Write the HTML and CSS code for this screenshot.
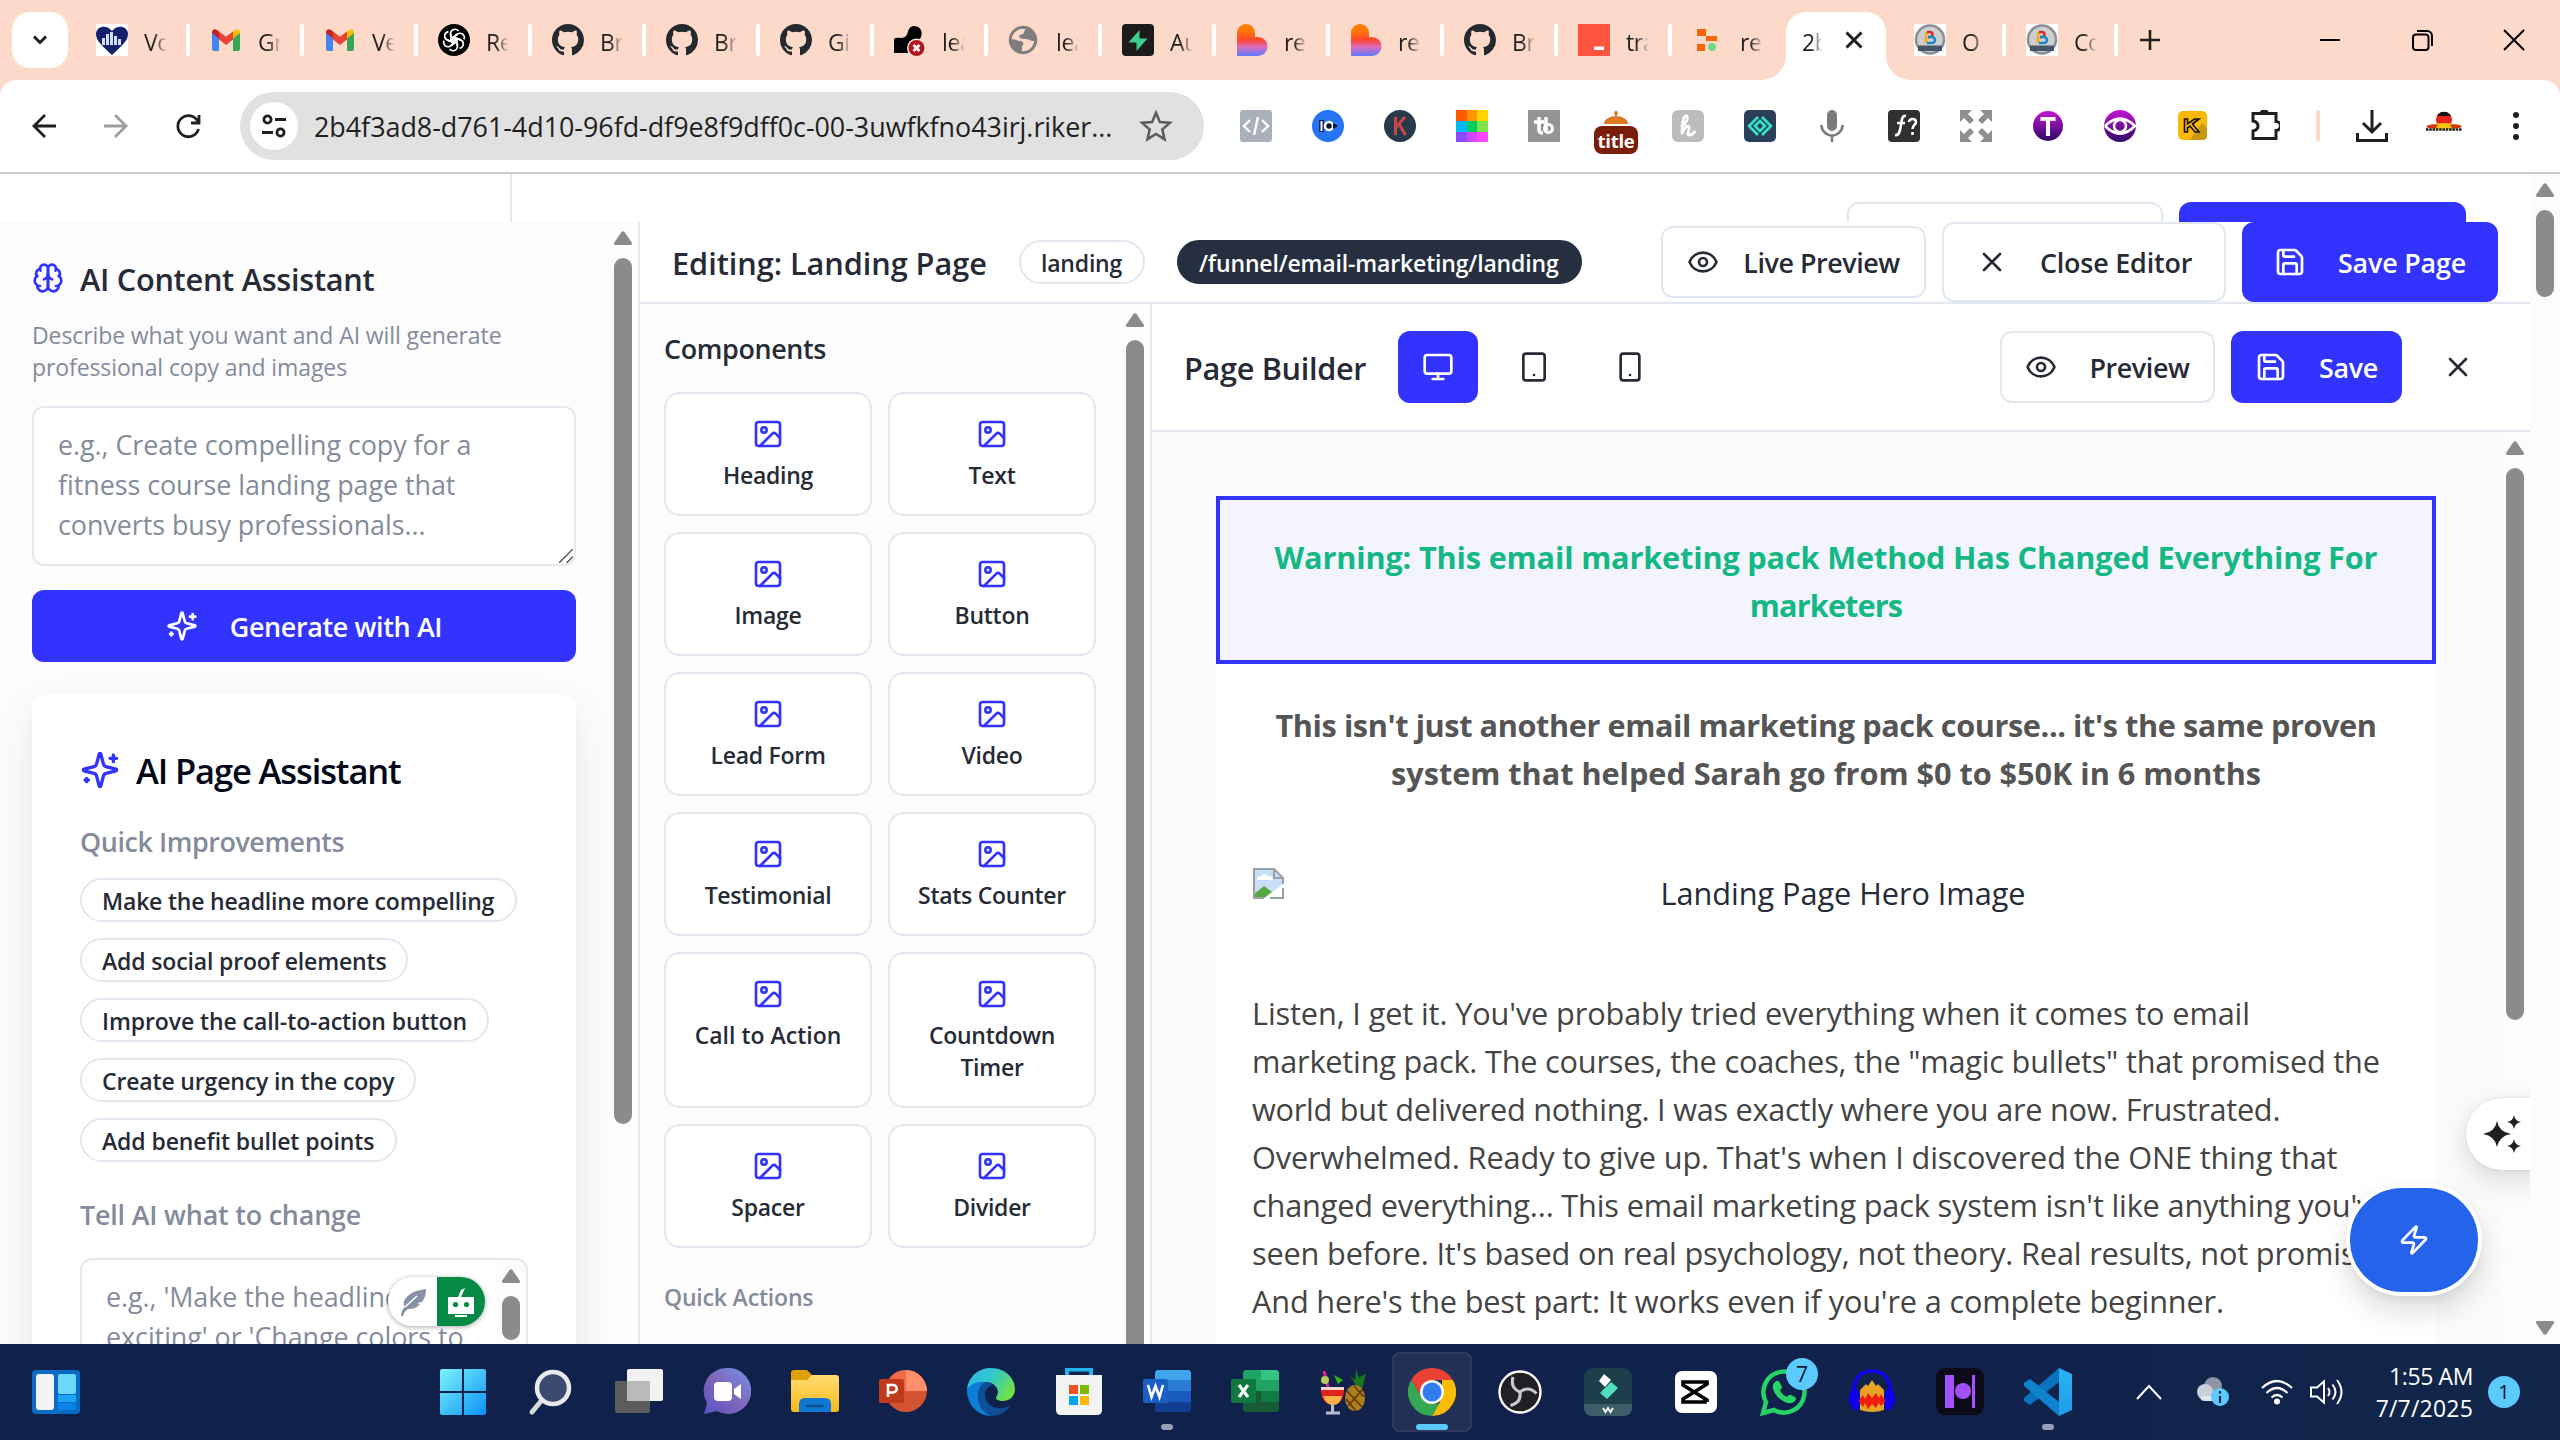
FILE: index.html
```html
<!DOCTYPE html>
<html lang="en">
<head>
<meta charset="utf-8">
<title>Page Builder</title>
<link rel="stylesheet" href="styles.css">
</head>
<body>
<svg class="defs" aria-hidden="true">
  <defs>
    <linearGradient id="lov" x1="0" y1="0" x2="0" y2="1"><stop offset="0.2" stop-color="#ff7a00"/><stop offset="0.5" stop-color="#ff4530"/><stop offset="0.72" stop-color="#d86cc0"/><stop offset="1" stop-color="#5f7cff"/></linearGradient>
    <linearGradient id="win" x1="0" y1="0" x2="1" y2="1"><stop offset="0" stop-color="#7df3fb"/><stop offset="1" stop-color="#0a92f7"/></linearGradient>
    <linearGradient id="fold" x1="0" y1="0" x2="0" y2="1"><stop offset="0" stop-color="#ffdc70"/><stop offset="1" stop-color="#fbb91a"/></linearGradient>
    <linearGradient id="chat" x1="1" y1="0" x2="0" y2="1"><stop offset="0" stop-color="#6f95ee"/><stop offset="0.5" stop-color="#8168b8"/><stop offset="1" stop-color="#5b52c8"/></linearGradient>
    <linearGradient id="edgea" x1="0" y1="0" x2="1" y2="0.5"><stop offset="0" stop-color="#2fb3ee"/><stop offset="0.5" stop-color="#2fc7cf"/><stop offset="1" stop-color="#6be04a"/></linearGradient>
    <linearGradient id="purp" x1="0" y1="0" x2="0" y2="1"><stop offset="0" stop-color="#c414d2"/><stop offset="1" stop-color="#2d0a66"/></linearGradient>
    <linearGradient id="code" x1="0" y1="0" x2="0" y2="1"><stop offset="0" stop-color="#29b2f5"/><stop offset="1" stop-color="#1e9de8"/></linearGradient>
  </defs>
  <symbol id="eye" viewBox="0 0 24 24"><path d="M2.062 12.348a1 1 0 0 1 0-.696 10.75 10.75 0 0 1 19.876 0 1 1 0 0 1 0 .696 10.75 10.75 0 0 1-19.876 0"/><circle cx="12" cy="12" r="3"/></symbol>
  <symbol id="save" viewBox="0 0 24 24"><path d="M15.2 3a2 2 0 0 1 1.4.6l3.8 3.8a2 2 0 0 1 .6 1.4V19a2 2 0 0 1-2 2H5a2 2 0 0 1-2-2V5a2 2 0 0 1 2-2z"/><path d="M17 21v-7a1 1 0 0 0-1-1H8a1 1 0 0 0-1 1v7"/><path d="M7 3v4a1 1 0 0 0 1 1h7"/></symbol>
  <symbol id="sparkles" viewBox="0 0 24 24"><path d="M9.937 15.5A2 2 0 0 0 8.5 14.063l-6.135-1.582a.5.5 0 0 1 0-.962L8.5 9.936A2 2 0 0 0 9.937 8.5l1.582-6.135a.5.5 0 0 1 .963 0L14.063 8.5A2 2 0 0 0 15.5 9.937l6.135 1.581a.5.5 0 0 1 0 .964L15.5 14.063a2 2 0 0 0-1.437 1.437l-1.582 6.135a.5.5 0 0 1-.963 0z"/><path d="M20 3v4M22 5h-4M4 17v2M5 18H3"/></symbol>
  <symbol id="brain" viewBox="0 0 24 24"><path d="M12 5a3 3 0 1 0-5.997.125 4 4 0 0 0-2.526 5.77 4 4 0 0 0 .556 6.588A4 4 0 1 0 12 18Z"/><path d="M12 5a3 3 0 1 1 5.997.125 4 4 0 0 1 2.526 5.77 4 4 0 0 1-.556 6.588A4 4 0 1 1 12 18Z"/><path d="M15 13a4.5 4.5 0 0 1-3-4 4.5 4.5 0 0 1-3 4M17.599 6.5a3 3 0 0 0 .399-1.375M6.003 5.125A3 3 0 0 0 6.401 6.5M3.477 10.896a4 4 0 0 1 .585-.396M19.938 10.5a4 4 0 0 1 .585.396M6 18a4 4 0 0 1-1.967-.516M19.967 17.484A4 4 0 0 1 18 18"/></symbol>
  <symbol id="image" viewBox="0 0 24 24"><rect width="18" height="18" x="3" y="3" rx="2"/><circle cx="9" cy="9" r="2"/><path d="m21 15-3.086-3.086a2 2 0 0 0-2.828 0L6 21"/></symbol>
  <symbol id="x" viewBox="0 0 24 24"><path d="M18 6 6 18M6 6l12 12"/></symbol>
  <symbol id="github" viewBox="0 0 16 16"><path fill="#24292f" d="M8 0C3.58 0 0 3.58 0 8c0 3.54 2.29 6.53 5.47 7.59.4.07.55-.17.55-.38 0-.19-.01-.82-.01-1.49-2.01.37-2.53-.49-2.69-.94-.09-.23-.48-.94-.82-1.13-.28-.15-.68-.52-.01-.53.63-.01 1.08.58 1.23.82.72 1.21 1.87.87 2.33.66.07-.52.28-.87.51-1.07-1.78-.2-3.64-.89-3.64-3.95 0-.87.31-1.59.82-2.15-.08-.2-.36-1.02.08-2.12 0 0 .67-.21 2.2.82a7.6 7.6 0 0 1 4 0c1.53-1.04 2.2-.82 2.2-.82.44 1.1.16 1.92.08 2.12.51.56.82 1.27.82 2.15 0 3.07-1.87 3.75-3.65 3.95.29.25.54.73.54 1.48 0 1.07-.01 1.93-.01 2.2 0 .21.15.46.55.38A8 8 0 0 0 16 8c0-4.42-3.58-8-8-8"/></symbol>
  <symbol id="gmail" viewBox="0 0 32 32"><path fill="#4285f4" d="M2 8v17a2 2 0 0 0 2 2h5V14z"/><path fill="#34a853" d="M30 8v17a2 2 0 0 1-2 2h-5V14z"/><path fill="#c5221f" d="M2 8.500V9l7 5.500V7.500L7 6C5 4.500 2 5.500 2 8.500"/><path fill="#fbbc04" d="M30 8.500V9l-7 5.500V7.500L25 6c2-1.500 5-.5 5 2.500"/><path fill="#ea4335" d="M9 7.500 16 12.700 23 7.500v8L16 21 9 15.500z"/></symbol>
  <symbol id="lovable" viewBox="0 0 32 32"><path fill="url(#lov)" d="M1 32V9a9 9 0 0 1 18 0v4h3a9.500 9.500 0 0 1 0 19z"/></symbol>
  <symbol id="seal" viewBox="0 0 32 32"><rect width="32" height="32" fill="#fff"/><circle cx="16" cy="15.500" r="14" fill="#cfcfd2" stroke="#8b8d92" stroke-width="2.500"/><path d="M12 8v11" stroke="#e8b02a" stroke-width="3"/><path d="M13 8h3a2.500 2.500 0 0 1 0 5h-2" fill="none" stroke="#d62a2a" stroke-width="2.500"/><path d="M14 13h4a3 3 0 0 1 0 6h-5" fill="none" stroke="#1d86c8" stroke-width="2.500"/><rect x="4" y="21.500" width="24" height="5.500" fill="#46566a"/></symbol>
  <symbol id="tri" viewBox="0 0 18 14"><path fill="#8b8b8b" d="M7.300 1.200a2 2 0 0 1 3.400 0l6.800 10A1.600 1.600 0 0 1 16.200 14H1.800A1.600 1.600 0 0 1 .5 11.200z"/></symbol>
</svg>

<div class="tabstrip">
  <div class="tab-search"><svg width="20" height="20" viewBox="0 0 20 20"><path d="m4 6.500 6 6 6-6" fill="none" stroke="#1f1f1f" stroke-width="3"/></svg></div>
  <div class="tab first"><svg class="fav" viewBox="0 0 32 32"><rect width="32" height="32" fill="#fff"/><path d="M16 31C5 21 0 16 0 10 0 2 11 0 16 7c5-7 16-5 16 3 0 6-5 11-16 21" fill="#14206b"/><path d="M6 21V14h3v7m1 0V10h3v11m1 0V8h3v13m1 0V12h3v9m1 0v-6h3v6" fill="#cfe0f5"/></svg><span>Vo</span></div>
  <div class="tab"><svg class="fav"><use href="#gmail"/></svg><span>Gr</span></div>
  <div class="tab"><svg class="fav"><use href="#gmail"/></svg><span>Ve</span></div>
  <div class="tab"><svg class="fav" viewBox="0 0 32 32"><circle cx="16" cy="16" r="16"/><g fill="none" stroke="#fff" stroke-width="1.600"><path id="pt" d="M12.500 12.500V9.500a4.500 4.500 0 0 1 8-2.500M12.500 12.500l6.500 3.700v6"/><use href="#pt" transform="rotate(60 16 16)"/><use href="#pt" transform="rotate(120 16 16)"/><use href="#pt" transform="rotate(180 16 16)"/><use href="#pt" transform="rotate(240 16 16)"/><use href="#pt" transform="rotate(300 16 16)"/></g></svg><span>Re</span></div>
  <div class="tab"><svg class="fav"><use href="#github"/></svg><span>Br</span></div>
  <div class="tab"><svg class="fav"><use href="#github"/></svg><span>Br</span></div>
  <div class="tab"><svg class="fav"><use href="#github"/></svg><span>Gi</span></div>
  <div class="tab"><svg class="fav" viewBox="0 0 32 32"><path d="M0 15c4-3 8 1 12-3 3-3 1-9 8-10 8 0 10 9 5 14-4 4-11 5-11 13H0z"/><circle cx="22.500" cy="24" r="9.500" fill="#fbeae2"/><circle cx="22.500" cy="24" r="8" fill="#b3151f"/><path d="m19.500 21 6 6m0-6-6 6" stroke="#fff" stroke-width="2.600"/></svg><span>lea</span></div>
  <div class="tab"><svg class="fav" viewBox="0 0 32 32"><circle cx="15" cy="16" r="12.700" fill="none" stroke="#7e7e7e" stroke-width="3"/><path fill="#7e7e7e" d="M3 15c4 0 7 2 10 2 3 1 3 4 1 5v6C7 27 3 22 3 15M11 12c1-2 4-1 5-3 0-2 1-4 3-5 5 2 8 6 8 12-3 3-5-1-9-1-3 0-7 0-7-3"/></svg><span>lea</span></div>
  <div class="tab"><svg class="fav" viewBox="0 0 32 32"><rect width="32" height="32" rx="4" fill="#1c1c1c"/><path fill="#3ecf8e" d="M17.500 6v8.500H25.500L14.500 27v-8.500H6.500z"/></svg><span>Au</span></div>
  <div class="tab"><svg class="fav"><use href="#lovable"/></svg><span>re</span></div>
  <div class="tab"><svg class="fav"><use href="#lovable"/></svg><span>re</span></div>
  <div class="tab"><svg class="fav"><use href="#github"/></svg><span>Br</span></div>
  <div class="tab"><svg class="fav" viewBox="0 0 32 32"><rect width="32" height="32" fill="#ff5440"/><rect x="16" y="22.500" width="10" height="3.500" fill="#fff"/></svg><span>tra</span></div>
  <div class="tab last"><svg class="fav" viewBox="0 0 32 32"><path fill="#f9640a" d="M5 5h9v7H5zM14 12h11v5H14zM5 20h8v7H5z"/><circle cx="20" cy="23" r="4" fill="#6bdc84"/></svg><span>re</span></div>
  <div class="tab active"><span>2b</span><svg width="32" height="32" viewBox="0 0 32 32"><path d="m8.500 8.500 15 15m0-15-15 15" stroke="#1f1f1f" stroke-width="3"/></svg></div>
  <div class="tab after"><svg class="fav"><use href="#seal"/></svg><span>O</span></div>
  <div class="tab"><svg class="fav"><use href="#seal"/></svg><span>Co</span></div>
  <svg class="newtab" viewBox="0 0 24 24"><path d="M12 2v20M2 12h20" stroke="#1f1f1f" stroke-width="2.600"/></svg>
  <div class="wincontrols">
    <svg width="24" height="24" viewBox="0 0 24 24"><path d="M2 12h20" stroke="#000" stroke-width="2"/></svg>
    <svg width="24" height="24" viewBox="0 0 24 24"><g fill="none" stroke="#000" stroke-width="2"><rect x="3" y="6.500" width="15.500" height="15.500" rx="3"/><path d="M7 3h10a5 5 0 0 1 5 5v10"/></g></svg>
    <svg width="24" height="24" viewBox="0 0 24 24"><path d="m2 2 20 20M22 2 2 22" stroke="#000" stroke-width="2"/></svg>
  </div>
</div>

<div class="toolbar">
  <div class="nav">
    <svg width="32" height="32" viewBox="0 0 32 32"><path d="M28 16H6M17 5 6 16l11 11" fill="none" stroke="#1f1f1f" stroke-width="2.800"/></svg>
    <svg width="32" height="32" viewBox="0 0 32 32"><path d="M4 16h22M15 5l11 11-11 11" fill="none" stroke="#9e9e9e" stroke-width="2.800"/></svg>
    <svg width="32" height="32" viewBox="0 0 32 32"><path d="M27 5v8h-8M26 12a10.500 10.500 0 1 0 .5 7" fill="none" stroke="#1f1f1f" stroke-width="2.800"/></svg>
  </div>
  <div class="omnibox">
    <div class="siteinfo"><svg width="28" height="28" viewBox="0 0 28 28"><g fill="none" stroke="#1f1f1f" stroke-width="2.800"><circle cx="7.500" cy="7.500" r="3.600"/><path d="M15 7.500h11M2 20.500h11"/><circle cx="20.500" cy="20.500" r="3.600"/></g></svg></div>
    <span class="url">2b4f3ad8-d761-4d10-96fd-df9e8f9dff0c-00-3uwfkfno43irj.riker...</span>
    <svg width="36" height="36" viewBox="0 0 24 24"><path d="m12 3.200 2.600 6.100 6.600.6-5 4.400 1.500 6.500-5.700-3.500-5.700 3.500 1.500-6.500-5-4.400 6.600-.6z" fill="none" stroke="#5c5c5c" stroke-width="1.700"/></svg>
  </div>
  <div class="exts">
    <svg viewBox="0 0 32 32"><rect width="32" height="32" rx="3" fill="#a9b0bb"/><path d="m10 10-6 6 6 6M22 10l6 6-6 6M18 7l-4 18" fill="none" stroke="#fff" stroke-width="2.400"/></svg>
    <svg viewBox="0 0 32 32"><circle cx="16" cy="16" r="16" fill="#2474f5"/><path d="M9.500 10v12" stroke="#0b1430" stroke-width="4.500"/><path d="M9.500 11v10" stroke="#fff" stroke-width="2"/><circle cx="17" cy="16" r="4" fill="#0b1430" stroke="#fff" stroke-width="2.500"/><path d="m21 13 5 3-5 3" fill="#0b1430"/></svg>
    <svg viewBox="0 0 32 32"><circle cx="16" cy="16" r="16" fill="#263a4b"/><path d="M11.500 7v18M21 7l-9 10M15 14l6.500 11" stroke="#c44" stroke-width="3"/></svg>
    <svg viewBox="0 0 32 32"><path fill="#ff5a00" d="M0 0h11v11H0z"/><path fill="#ff9300" d="M11 0h10v11H11z"/><path fill="#ffd400" d="M21 0h11v11H21z"/><path fill="#00b8ff" d="M0 11h11v11H0z"/><path fill="#00cf5d" d="M11 11h10v11H11z"/><path fill="#7fe34a" d="M21 11h11v11H21z"/><path fill="#8a4bff" d="M0 22h11v10H0z"/><path fill="#cf48ff" d="M11 22h10v10H11z"/><path fill="#ff46ff" d="M21 22h11v10H21z"/></svg>
    <svg viewBox="0 0 32 32"><rect width="32" height="32" rx="1" fill="#949494"/><path d="M11 7v13q0 3 4 3M6 12h10M18 7v15" fill="none" stroke="#fff" stroke-width="3.600"/><circle cx="20.500" cy="18.500" r="4" fill="none" stroke="#fff" stroke-width="3"/></svg>
    <div class="titleext"><svg viewBox="0 0 32 32"><circle cx="16" cy="3" r="2"/><path d="M15 4h2v3h-2zM4 14a12 8 0 0 1 24 0z"/></svg><b>title</b></div>
    <svg viewBox="0 0 32 32"><rect width="32" height="32" rx="6" fill="#bdbdbd"/><path d="M9 17c6-4 8-11 5-11s-4 8-4 18c2-7 6-9 7-7s-3 8 0 8 5-2 6-4" fill="none" stroke="#fff" stroke-width="2.800"/></svg>
    <svg viewBox="0 0 32 32"><rect width="32" height="32" rx="5" fill="#2a405a"/><path d="m14 7-9 9 9 9M18 7l9 9-9 9M16 11l-5 5 5 5 5-5z" fill="none" stroke="#33e6c0" stroke-width="2.600"/></svg>
    <svg viewBox="0 0 32 32"><rect x="11" width="10" height="21" rx="5" fill="#7b7b7b"/><path d="M5.500 15a10.500 10.500 0 0 0 21 0M16 26v6" fill="none" stroke="#7b7b7b" stroke-width="2.600"/></svg>
    <svg viewBox="0 0 32 32"><rect width="32" height="32" rx="4" fill="#303030"/><path d="M18 6c-4-1-4 3-5 9s-2 11-6 10M9 13h8M21 12c0-4 7-4 7 0 0 3-3.500 3-3.500 7M24.500 22v3" fill="none" stroke="#fff" stroke-width="2.600"/></svg>
    <svg viewBox="0 0 32 32"><path fill="#8f8f8f" d="M0 0h12L8 4l6 6-4 4-6-6-4 4zM32 0v12l-4-4-6 6-4-4 6-6-4-4zM0 32V20l4 4 6-6 4 4-6 6 4 4zM32 32H20l4-4-6-6 4-4 6 6 4-4z"/></svg>
    <svg viewBox="0 0 32 32"><circle cx="16" cy="16" r="15" fill="url(#purp)"/><path d="M8.500 9h15M16 9v17" stroke="#fff" stroke-width="4"/></svg>
    <svg viewBox="0 0 32 32"><circle cx="16" cy="16" r="16" fill="url(#purp)"/><path d="M1 16q15-15 30 0-15 15-30 0" fill="none" stroke="#fff" stroke-width="2.600"/><circle cx="16" cy="16" r="6" fill="none" stroke="#fff" stroke-width="2.600"/></svg>
    <svg viewBox="0 0 32 32"><rect x="2" y="1" width="29" height="29" rx="5" fill="#fbb805"/><path d="m14 30 12-17 5 5v8q0 4-5 4z" fill="#c9980c"/><path d="M8.500 9v13h3v-4l2.500-2 5 6h4l-6.500-8L23 9h-4.500l-7 5V9z" fill="none" stroke="#111" stroke-width="1.600"/></svg>
    <svg viewBox="0 0 32 32"><path d="M5 3.500h23v8a4 4 0 0 1 0 9v8H5v-7.500q5-1 5-5t-5-5zM13 3a3.500 3.500 0 0 1 6.500 0" fill="none" stroke="#1f1f1f" stroke-width="3"/></svg>
    <i></i>
    <svg viewBox="0 0 32 32"><path d="M16 0v21M7 13l9 9 9-9M1.500 23v7.500h29V23" fill="none" stroke="#1f1f1f" stroke-width="3"/></svg>
    <svg class="profile" viewBox="0 0 40 32"><circle cx="20" cy="10" r="8" fill="#e8221c"/><path d="M13 6a8 8 0 0 1 14 0z" fill="#111"/><path d="M6 15q14-4 28 0l-2 4H8z" fill="#f7c412"/><path d="M2 16q7-3 12-1l-2 3H4zM26 15q6-2 12 1l-2 2H28z" fill="#d4380f"/><path d="M2 19.500h36" stroke="#1c1c1c" stroke-width="2.500" stroke-dasharray="2.500 .8"/></svg>
    <svg viewBox="0 0 32 32"><g fill="#1f1f1f"><circle cx="16" cy="5" r="3"/><circle cx="16" cy="16" r="3"/><circle cx="16" cy="27" r="3"/></g></svg>
  </div>
</div>

<div class="viewport">
  <div class="content">
    <div class="backdrop">
      <div class="back-side"></div>
      <div class="back-main"><div class="ghost"></div><div class="ghost solid"></div></div>
    </div>
    <div class="editor">
      <aside class="sidebar">
        <div class="side-body">
          <h2 class="side-title"><svg class="ic blue"><use href="#brain"/></svg>AI Content Assistant</h2>
          <p class="hint">Describe what you want and AI will generate<br>professional copy and images</p>
          <div class="textarea">e.g., Create compelling copy for a<br>fitness course landing page that<br>converts busy professionals...
            <svg class="grip" viewBox="0 0 14 14"><path d="M0 14 14 0M7.500 14 14 7.500" stroke="#555" stroke-width="1.400"/></svg>
          </div>
          <div class="btn primary wide"><svg class="ic"><use href="#sparkles"/></svg><span>Generate with AI</span></div>
          <div class="card">
            <h3><svg class="ic blue big"><use href="#sparkles"/></svg><span>AI Page Assistant</span></h3>
            <div class="label tight">Quick Improvements</div>
            <div class="chips">
              <div class="chip">Make the headline more compelling</div>
              <div class="chip c2">Add social proof elements</div>
              <div class="chip c3">Improve the call-to-action button</div>
              <div class="chip c4">Create urgency in the copy</div>
              <div class="chip c5">Add benefit bullet points</div>
            </div>
            <div class="label tell">Tell AI what to change</div>
            <div class="textarea small">
              <div class="ph">e.g., 'Make the headline more<br>exciting' or 'Change colors to</div>
              <div class="scroll"><svg class="arrow"><use href="#tri"/></svg><div class="thumb"></div></div>
              <div class="helper">
                <div><svg width="28" height="30" viewBox="0 0 28 30"><path fill="#8791a8" d="M2 29c0-4 1-6 4-9-4-5 2-12 9-15 4-2 8-2 12-3 0 5-1 9-4 13l-5 1 3 1c-3 4-7 5-12 5-3 2-4 4-5 7z"/><path d="M6 20 18 9" stroke="#fff" stroke-width="1.600"/></svg></div>
                <div class="bot"><svg width="30" height="30" viewBox="0 0 30 30"><path fill="#fff" d="M2 10h10l3-7 4-2-4 9h13v17H2zM9 28h12v2H9z"/><circle cx="9.500" cy="17.500" r="2.600" fill="#058a45"/><circle cx="20.500" cy="17.500" r="2.600" fill="#058a45"/></svg></div>
              </div>
            </div>
          </div>
        </div>
        <div class="scroll"><svg class="arrow"><use href="#tri"/></svg><div class="thumb"></div></div>
      </aside>

      <main class="main">
        <header class="edit-head">
          <h1>Editing: Landing Page</h1>
          <div class="chip type">landing</div>
          <div class="chip dark">/funnel/email-marketing/landing</div>
          <div class="actions">
            <div class="btn outline live"><svg class="ic"><use href="#eye"/></svg><span>Live Preview</span></div>
            <div class="btn outline tall close"><svg class="ic"><use href="#x"/></svg><span>Close Editor</span></div>
            <div class="btn primary tall savepage"><svg class="ic"><use href="#save"/></svg><span>Save Page</span></div>
          </div>
        </header>
        <div class="workspace">
          <section class="components">
            <div class="comp-body">
              <h4>Components</h4>
              <div class="grid">
                <div class="tile"><svg class="ic blue"><use href="#image"/></svg>Heading</div>
                <div class="tile"><svg class="ic blue"><use href="#image"/></svg>Text</div>
                <div class="tile"><svg class="ic blue"><use href="#image"/></svg>Image</div>
                <div class="tile"><svg class="ic blue"><use href="#image"/></svg>Button</div>
                <div class="tile"><svg class="ic blue"><use href="#image"/></svg>Lead Form</div>
                <div class="tile"><svg class="ic blue"><use href="#image"/></svg>Video</div>
                <div class="tile"><svg class="ic blue"><use href="#image"/></svg>Testimonial</div>
                <div class="tile"><svg class="ic blue"><use href="#image"/></svg>Stats Counter</div>
                <div class="tile loose"><svg class="ic blue"><use href="#image"/></svg>Call to Action</div>
                <div class="tile"><svg class="ic blue"><use href="#image"/></svg>Countdown<br>Timer</div>
                <div class="tile"><svg class="ic blue"><use href="#image"/></svg>Spacer</div>
                <div class="tile"><svg class="ic blue"><use href="#image"/></svg>Divider</div>
              </div>
              <div class="quick">Quick Actions</div>
            </div>
            <div class="scroll"><svg class="arrow"><use href="#tri"/></svg><div class="thumb"></div></div>
          </section>
          <section class="builder">
            <div class="build-head">
              <h2>Page Builder</h2>
              <div class="devices">
                <div class="btn primary"><svg class="ic" viewBox="0 0 24 24"><rect width="20" height="14" x="2" y="3" rx="2"/><path d="M8 21h8M12 17v4"/></svg></div>
                <div class="btn"><svg class="ic" viewBox="0 0 24 24"><rect width="16" height="20" x="4" y="2" rx="2"/><path d="M12 18h.01"/></svg></div>
                <div class="btn"><svg class="ic" viewBox="0 0 24 24"><rect width="14" height="20" x="5" y="2" rx="2"/><path d="M12 18h.01"/></svg></div>
              </div>
              <div class="actions">
                <div class="btn outline preview"><svg class="ic"><use href="#eye"/></svg><span>Preview</span></div>
                <div class="btn primary saveonly"><svg class="ic"><use href="#save"/></svg><span>Save</span></div>
                <div class="btn sq"><svg class="ic"><use href="#x"/></svg></div>
              </div>
            </div>
            <div class="canvas">
              <div class="stage">
                <article class="paper">
                  <div class="block headline">Warning: This email marketing pack Method Has Changed Everything For<br><span class="tighter">marketers</span></div>
                  <div class="block sub">This isn't just another email marketing pack course... it's the same proven<br><span class="looser">system that helped Sarah go from $0 to $50K in 6 months</span></div>
                  <div class="block hero"><svg width="34" height="34" viewBox="0 0 34 34"><path fill="#c9def8" d="M2 2h20l9 9v6L13 31H2z"/><path fill="#fff" d="M5 13q0-4 4-4 3-4 7 0 5 0 5 4z"/><path fill="#53a93f" d="m2 27 10-8 8 6-8 6H2z"/><path d="M12 31H2V2h20l9 9v6M22 2v9h9M31 21v10H18" fill="none" stroke="#9aa0a8" stroke-width="2"/></svg><span>Landing Page Hero Image</span></div>
                  <div class="block body"><span class="l1">Listen, I get it. You've probably tried everything when it comes to email</span><br>marketing pack. The courses, the coaches, the "magic bullets" that promised the<br><span class="l3">world but delivered nothing. I was exactly where you are now. Frustrated.</span><br><span class="l4">Overwhelmed. Ready to give up. That's when I discovered the ONE thing that</span><br><span class="l5">changed everything... This email marketing pack system isn't like anything you've</span><br><span class="l5">seen before. It's based on real psychology, not theory. Real results, not promises.</span><br><span class="l5">And here's the best part: It works even if you're a complete beginner.</span></div>
                </article>
              </div>
              <div class="scroll"><svg class="arrow"><use href="#tri"/></svg><div class="thumb"></div></div>
            </div>
          </section>
        </div>
      </main>
    </div>
    <div class="spark-dock"><svg width="42" height="42" viewBox="0 0 42 42"><path fill="#1f1f1f" d="M15 8q2 11 14 13-12 2-14 13Q13 23 1 21 13 19 15 8M32 2q1 6 7 7-6 1-7 7-1-6-7-7 6-1 7-7M32 26q1 6 7 7-6 1-7 7-1-6-7-7 6-1 7-7"/></svg></div>
    <div class="fab"><svg class="ic" viewBox="0 0 24 24"><path d="M4 14a1 1 0 0 1-.78-1.630l9.900-10.200a.5.5 0 0 1 .86.46l-1.920 6.020A1 1 0 0 0 13 10h7a1 1 0 0 1 .78 1.630l-9.900 10.200a.5.5 0 0 1-.86-.46l1.920-6.020A1 1 0 0 0 11 14z"/></svg></div>
  </div>
  <div class="scroll page"><svg class="arrow"><use href="#tri"/></svg><div class="thumb"></div><svg class="arrow down"><use href="#tri"/></svg></div>
</div>

<div class="taskbar">
  <svg class="app widgets" viewBox="0 0 48 48"><rect y="2" width="48" height="44" rx="4" fill="#0a6bc4"/><rect x="4" y="6" width="18" height="36" rx="3" fill="#f4f4f4"/><rect x="26" y="6" width="18" height="20" rx="2" fill="#6bd8fb"/><rect x="26" y="27" width="18" height="7" fill="#1aa5f8"/><rect x="26" y="35" width="18" height="7" rx="2" fill="#0a84ea"/></svg>
  <div class="apps">
    <div><svg class="app" viewBox="0 0 48 48"><path fill="url(#win)" d="M3 1h20v22H1V3q0-2 2-2M25 1h20q2 0 2 2v20H25zM1 25h22v22H3q-2 0-2-2zM25 25h22v20q0 2-2 2H25z"/></svg></div>
    <div><svg class="app" viewBox="0 0 48 48"><path d="M15 32 5 44" stroke="#d6dad9" stroke-width="5" stroke-linecap="round"/><circle cx="26" cy="20" r="16" fill="#3b4a70" stroke="#e8ebea" stroke-width="4.500"/></svg></div>
    <div><svg class="app" viewBox="0 0 48 48"><rect x="12" y="1" width="36" height="32" rx="2" fill="#f2f2f2"/><rect y="13" width="35" height="32" rx="2" fill="#5c5c5c"/><path fill="#b9b9b9" d="M12 13h23v20H12z"/></svg></div>
    <div><svg class="app" viewBox="0 0 48 48"><path fill="url(#chat)" d="M24 0a23 23 0 1 1-10 43L1 46l3-11A23 23 0 0 1 24 0"/><rect x="11" y="14" width="18" height="19" rx="4" fill="#fff"/><path fill="#fff" d="m31 21 7-5v15l-7-5z"/></svg></div>
    <div><svg class="app" viewBox="0 0 48 48"><path fill="#dfa008" d="M0 5q0-3 3-3h13l5 5v6H0z"/><path fill="url(#fold)" d="M0 12h16l5-5h24q3 0 3 3v31q0 3-3 3H3q-3 0-3-3z"/><path fill="#0f78d0" d="M8 44V36q0-6 6-6h20q6 0 6 6v8z"/><path d="M15 38h18" stroke="#0a4f94" stroke-width="2.500"/></svg></div>
    <div><svg class="app" viewBox="0 0 48 48"><circle cx="27" cy="23" r="21" fill="#d35230"/><path fill="#ff8f6b" d="M27 2a21 21 0 0 1 21 21H27z"/><path fill="#ed6c47" d="M27 2v21H6A21 21 0 0 1 27 2"/><rect y="11" width="25" height="24" rx="2" fill="#c13b1b"/><path d="M9 29V17h5a3.500 3.500 0 0 1 0 7.500H9" fill="none" stroke="#fff" stroke-width="2.600"/></svg></div>
    <div><svg class="app" viewBox="0 0 48 48"><path fill="url(#edgea)" d="M0 22C1 8 12 0 24 0c15 0 24 11 24 21 0 8-6 12-12 12-5 0-7-2-7-3 0-2 2-3 2-6 0-5-5-10-13-10C9 14 2 18 0 22"/><path fill="#0c7ed6" d="M0 22c2-5 9-9 18-8-5 3-7 9-7 14 0 10 7 18 14 20C10 48 0 36 0 22"/><path fill="#0f4f9a" d="M18 26c0 9 8 16 18 14q4-1 7-2C38 45 31 48 25 48 17 46 11 38 11 29c0-6 2-12 7-15q5 0 8 3c-5 1-8 5-8 9"/></svg></div>
    <div><svg class="app" viewBox="0 0 48 48"><path d="M12 10V1.500h24V10" fill="none" stroke="#22b5ee" stroke-width="4"/><path fill="#f3f3f3" d="M1 7h46v35q0 5-5 5H6q-5 0-5-5z"/><path fill="#f25022" d="M14 17h9v9h-9z"/><path fill="#7fba00" d="M25 17h9v9h-9z"/><path fill="#00a4ef" d="M14 28h9v9h-9z"/><path fill="#ffb900" d="M25 28h9v9h-9z"/></svg></div>
    <div class="open"><svg class="app" viewBox="0 0 48 48"><path fill="#41a5ee" d="M14 2h32l2 2v8H12V4z"/><path fill="#2b7cd3" d="M12 12h36v11H12z"/><path fill="#185abd" d="M12 23h36v11H12z"/><path fill="#103f91" d="M12 34h36v8l-2 2H14l-2-2z"/><rect y="11" width="25" height="24" rx="2" fill="#1c5fc4"/><path d="m5 17 3.500 12L12.500 18l4 11L20 17" fill="none" stroke="#fff" stroke-width="2.600"/></svg></div>
    <div><svg class="app" viewBox="0 0 48 48"><path fill="#21a366" d="M14 2h16v21H12V4z"/><path fill="#33c481" d="M30 2h16l2 2v8H30z"/><path fill="#21a366" d="M30 12h18v11H30z"/><path fill="#107c41" d="M30 23h18v11H30z"/><path fill="#185c37" d="M12 23h18v11h18v8l-2 2H14l-2-2z"/><rect y="11" width="25" height="24" rx="2" fill="#10793f"/><path d="m8 17 9 12M17 17 8 29" stroke="#fff" stroke-width="3"/></svg></div>
    <div><svg class="app" viewBox="0 0 48 48"><path d="m40 22-9-14 5 4 1-11 3 9 7-5-4 17z" fill="#17761f"/><ellipse cx="36" cy="30" rx="10" ry="13" fill="#b07d1c"/><path d="m28 23 15 16M44 21 29 38M35 18l10 11M37 43 27 31" stroke="#5e3c08" stroke-width="1.800"/><path fill="#e2231a" d="M2 21h23q0 15-11 16Q2 36 2 21"/><path fill="#ffb04a" d="M4 28h19q-2 9-9 9T4 28"/><path d="M2 19h23v3H2z" fill="#f2d6d0"/><path d="M13.500 36v9M7 45h14" stroke="#b8bec8" stroke-width="3"/><path d="m5 3 4 16" stroke="#e0239a" stroke-width="3"/><circle cx="6" cy="12" r="4" fill="#b6c95c"/><path d="m15 7 9 5-5 4" fill="#2fb81c"/></svg></div>
    <div class="current"><svg class="app" viewBox="0 0 48 48"><path fill="#ea4335" d="M3.200 12A24 24 0 0 1 44.800 12H24L14 30z"/><path fill="#fbbc04" d="M44.800 12A24 24 0 0 1 24 48L34 30V12z"/><path fill="#34a853" d="M24 48A24 24 0 0 1 3.200 12L14 30l10 6h7z"/><circle cx="24" cy="24" r="12" fill="#fff"/><circle cx="24" cy="24" r="9.500" fill="#2f7cf0"/></svg></div>
    <div><svg class="app" viewBox="0 0 48 48"><circle cx="24" cy="24" r="20.500" fill="#222024" stroke="#fff" stroke-width="2.400"/><g fill="none" stroke="#c9c8ce" stroke-width="3"><path id="ob" d="M24 24q-10-4-7-15"/><use href="#ob" transform="rotate(120 24 24)"/><use href="#ob" transform="rotate(240 24 24)"/></g></svg></div>
    <div><svg class="app" viewBox="0 0 48 48"><rect width="48" height="48" rx="9" fill="#1c3f4b"/><path d="M0 36h48v3q0 9-9 9H9q-9 0-9-9z" fill="#3d5e69"/><path fill="#fff" d="m20 6 7 6-6 7-6-6z"/><path fill="#4fe0c0" d="m27 14 7 6-11 11-7-6z"/><path d="m19 40 2.500 4 2.500-4 2.500 4 2.500-4" fill="none" stroke="#fff" stroke-width="1.800"/></svg></div>
    <div><svg class="app" viewBox="0 0 48 48"><rect x="3" y="3" width="42" height="42" rx="7" fill="#fff"/><path d="M35 14v2L11 31v3h22v-3M35 17v-3H11v3l24 15v2" fill="none" stroke="#000" stroke-width="3.600"/></svg></div>
    <div class="wa"><svg class="app" viewBox="0 0 48 48"><path fill="none" stroke="#25d366" stroke-width="4.500" d="M3 45 6 34A20.500 20.500 0 1 1 14 42z"/><path fill="#25d366" d="M16 13q3-1 4 2l2 4q0 2-2 3 2 5 7 7 2-3 4-2l4 2q2 2 0 4-4 4-10 1-9-4-12-13-1-5 3-8"/></svg><em>7</em></div>
    <div><svg class="app" viewBox="0 0 48 48"><path fill="#e5a425" d="M12 42V22l3-3 3-3 2 2 4-6 4 6 2-2 3 3 3 3v20q-12 4-24 0"/><path d="m11 32 4-5 2 4 3-6 4 5 4-5 3 5 2-4 4 6v2l-4 4-2-3-3 5-4-4-4 5-3-6-2 4-4-5z" fill="#f01c10"/><path d="M6 30Q4 3 24 3t18 27" fill="none" stroke="#0a00f5" stroke-width="3.500"/><path fill="#0a00f5" d="M5 20q5 0 6 6v16H7Q-4 34 5 20M43 20q-5 0-6 6v16h4q11-8 2-22"/></svg></div>
    <div><svg class="app" viewBox="0 0 48 48"><rect width="48" height="47" rx="9" fill="#0d0b1a"/><path fill="#a252fb" d="M9 7h9v33H9zM36 7h3v33h-3z"/><circle cx="27" cy="23" r="8" fill="#a252fb"/></svg></div>
    <div class="open"><svg class="app" viewBox="0 0 48 48"><path fill="#0a73bd" d="M35 0v14L6 37 0 33v-3z"/><path fill="#0f83cf" d="M6 11 35 34v14L0 18v-3z"/><path fill="url(#code)" d="m35 0 13 6v36l-13 6z"/></svg></div>
  </div>
  <div class="tray">
    <svg width="26" height="16" viewBox="0 0 26 16"><path d="m1 15 12-13 12 13" fill="none" stroke="#fff" stroke-width="2"/></svg>
    <svg class="cloud" width="34" height="32" viewBox="0 0 34 32"><circle cx="17" cy="10" r="9" fill="#8d95a5"/><circle cx="9" cy="16" r="8" fill="#c9cfda"/><path fill="#dfe3ea" d="M5 20h14v5H9q-6 0-4-5"/><circle cx="24" cy="21" r="9" fill="#5bcbff"/><path d="M24 20v7M24 15v2.500" stroke="#10204a" stroke-width="2.200"/></svg>
    <svg class="wifi" width="32" height="26" viewBox="0 0 32 26"><g fill="none" stroke="#fff" stroke-width="2.200"><path d="M1 9q15-14 30 0M5.500 14q10.500-10 21 0M10.500 18.500q5.500-5 11 0"/></g><circle cx="16" cy="22.500" r="3" fill="#fff"/></svg>
    <svg width="34" height="30" viewBox="0 0 34 30"><g fill="none" stroke="#fff" stroke-width="2"><path d="M2 10.500v9h6l7 6V4.500l-7 6zM19 11q3 4 0 8M23.500 7.500q6 7.500 0 15M28 3q9 12 0 24"/></g></svg>
    <div class="clock"><span>1:55 AM</span><br>7/7/2025</div>
    <div class="badge">1</div>
  </div>
</div>
</body>
</html>
```
FILE: styles.css
```css
* { box-sizing: border-box; }
body {
  margin: 0;
  width: 2560px;
  height: 1440px;
  display: flex;
  flex-direction: column;
  overflow: hidden;
  background: #fff;
  color: #262b36;
  font-family: "Open Sans", "Noto Sans", sans-serif;
  font-size: 26.9px;
}
h1, h2, h3, h4, p { margin: 0; font-weight: 600; }
svg { display: block; flex: none; }
.defs { position: absolute; width: 0; height: 0; }

/* tab strip */
.tabstrip { flex: none; height: 80px; background: #fcd9c8; display: flex; align-items: center; position: relative; }
.tab-search { width: 56px; height: 56px; margin-left: 12px; border-radius: 18px; background: #fff; display: flex; align-items: center; justify-content: center; }
.tab { width: 114px; height: 80px; flex: none; display: flex; align-items: center; position: relative; padding-left: 20px; gap: 16px; }
.tab.first { width: 122px; padding-left: 28px; }
.tab::after { content: ""; position: absolute; right: 0; top: 24px; width: 4px; height: 32px; border-radius: 2px; background: #fff; }
.tab.last::after, .tab.active::after { display: none; }
.tab.after { width: 120px; padding-left: 28px; }
.tab.after + .tab { width: 112px; }
.fav { width: 32px; height: 32px; }
.tab span { width: 22px; overflow: hidden; white-space: nowrap; font-size: 23px; line-height: 40px; padding-top: 3px; letter-spacing: -.4px; color: #1f1f1f; -webkit-mask-image: linear-gradient(90deg, #000 45%, transparent 105%); mask-image: linear-gradient(90deg, #000 45%, transparent 105%); }
.tab.active { width: 100px; height: 68px; align-self: flex-end; background: #fff; border-radius: 20px 20px 0 0; padding-left: 16px; padding-bottom: 12px; }
.tab.active::before { content: ""; position: absolute; left: -24px; right: -24px; bottom: 0; height: 24px; background: radial-gradient(circle at 0 0, transparent 23.5px, #fff 24px) left / 24px 24px no-repeat, radial-gradient(circle at 100% 0, transparent 23.5px, #fff 24px) right / 24px 24px no-repeat; }
.tab.active span { width: 20px; }
.newtab { width: 24px; height: 24px; margin-left: 20px; }
.wincontrols { margin-left: auto; margin-right: 34px; display: flex; gap: 68px; }

/* address row */
.toolbar { flex: none; height: 94px; border-bottom: 2px solid #c9cacb; display: flex; align-items: center; position: relative; background: #fff; }
.toolbar::before { content: ""; position: absolute; inset: 0 0 auto 0; height: 16px; background: radial-gradient(circle at 100% 100%, transparent 15.5px, #fcd9c8 16px) left / 16px 16px no-repeat, radial-gradient(circle at 0 100%, transparent 15.5px, #fcd9c8 16px) right / 16px 16px no-repeat; }
.nav { display: flex; gap: 40px; margin-left: 28px; }
.omnibox { width: 964px; height: 68px; margin-left: 36px; border-radius: 34px; background: #e1e1e1; display: flex; align-items: center; padding: 0 30px 0 10px; }
.siteinfo { width: 48px; height: 48px; border-radius: 24px; background: #fff; display: flex; align-items: center; justify-content: center; }
.url { flex: 1; margin-left: 16px; font-size: 26.9px; line-height: 40px; padding-top: 1px; color: #1f1f1f; white-space: nowrap; letter-spacing: -.03px; }
.exts { display: flex; align-items: center; gap: 40px; margin-left: 36px; }
.exts svg { width: 32px; height: 32px; }
.exts i { width: 4px; height: 32px; border-radius: 2px; background: #fcd9c8; margin: 0 -4px 0 -4px; }
.exts .profile { width: 40px; margin: 0 -4px; }
.titleext { width: 32px; height: 32px; position: relative; }
.titleext svg { fill: #de7a26; }
.titleext b { position: absolute; left: -6px; top: 16px; width: 44px; height: 28px; border-radius: 8px; background: #7a1e0a; color: #fff; font-size: 18.500px; line-height: 29px; text-align: center; letter-spacing: -.3px; }

/* shared controls */
.ic { width: 32px; height: 32px; fill: none; stroke: currentColor; stroke-width: 2; stroke-linecap: round; stroke-linejoin: round; }
.blue { color: #3333ff; }
.btn { display: flex; align-items: center; justify-content: center; height: 72px; border-radius: 12px; font-weight: 600; white-space: nowrap; }
.btn span { line-height: 40px; padding-top: 2px; }
.primary { background: #3333ff; color: #fff; }
.outline { background: #fff; border: 2px solid #e2e8f0; }
.tall { height: 80px; }
.chip { height: 44px; border: 2px solid #e2e8f0; border-radius: 22px; padding: 1px 0 0 20px; line-height: 40px; font-size: 23px; font-weight: 600; letter-spacing: -.2px; white-space: nowrap; }
.scroll { flex: none; width: 30px; background: #fcfcfc; display: flex; flex-direction: column; align-items: center; padding-top: 9px; }
.arrow { width: 18px; height: 14px; }
.thumb { width: 18px; border-radius: 9px; background: #8b8b8b; margin-top: 13px; flex: none; }

/* viewport */
.viewport { flex: none; height: 1170px; display: flex; overflow: hidden; }
.content { width: 2530px; position: relative; display: flex; flex-direction: column; overflow: hidden; }
.page .thumb { height: 87px; }
.page .down { margin: auto 0 9px; transform: rotate(180deg); }
.backdrop { flex: none; height: 48px; display: flex; overflow: hidden; }
.back-side { width: 512px; border-right: 2px solid #e2e8f0; }
.back-main { flex: 1; display: flex; justify-content: flex-end; gap: 16px; padding: 28px 64px 0 0; }
.ghost { flex: none; width: 316px; height: 80px; border: 2px solid #e2e8f0; border-radius: 12px; }
.ghost.solid { width: 287px; border: 0; background: #3333ff; }
.editor { flex: 1; display: flex; min-height: 0; }

/* assistant sidebar */
.sidebar { width: 640px; border-right: 2px solid #e2e8f0; background: #fcfcfc; display: flex; overflow: hidden; }
.side-body { flex: 1; padding: 36px 32px 0; width: 608px; overflow: hidden; }
.side-title { display: flex; align-items: center; gap: 16px; height: 40px; padding-top: 2px; font-size: 30.7px; line-height: 40px; letter-spacing: -.28px; }
.side-title svg { margin-top: -2px; }
.hint { margin-top: 20px; padding-top: 1px; height: 66px; font-size: 23px; line-height: 32px; font-weight: 400; color: #848b9b; letter-spacing: -.1px; white-space: nowrap; }
.textarea { position: relative; margin-top: 22px; width: 544px; height: 160px; border: 2px solid #e2e8f0; border-radius: 12px; background: #fff; padding: 17px 24px; line-height: 40px; color: #848b9b; letter-spacing: -.06px; white-space: nowrap; }
.grip { position: absolute; right: 1px; bottom: 1px; width: 14px; height: 14px; }
.wide { width: 544px; margin-top: 24px; gap: 32px; letter-spacing: -.35px; }
.card { width: 544px; height: 800px; margin-top: 32px; border-radius: 16px; background: #fff; padding: 48px 48px 0; box-shadow: 0 20px 50px rgba(0,0,0,.07), 0 8px 20px rgba(0,0,0,.03); }
.card h3 { display: flex; align-items: center; gap: 16px; height: 56px; color: #020817; font-size: 34.5px; letter-spacing: -1.11px; line-height: 56px; }
.card h3 span { padding-top: 2px; }
.big { width: 40px; height: 40px; }
.label { font-weight: 600; color: #848b9b; line-height: 40px; letter-spacing: -.2px; }
.label.tight { margin-top: 24px; letter-spacing: -.43px; }
.chips { display: flex; flex-direction: column; align-items: flex-start; gap: 16px; margin-top: 16px; }
.card .chip { width: 437px; }
.card .c2 { width: 328px; letter-spacing: -.15px; }
.card .c3 { width: 409px; letter-spacing: -.09px; }
.card .c4 { width: 336px; letter-spacing: -.15px; }
.card .c5 { width: 317px; letter-spacing: -.1px; }
.label.tell { margin-top: 33px; }
.small { width: 448px; height: 240px; margin-top: 23px; display: flex; padding: 0; overflow: hidden; }
.ph { width: 414px; padding: 17px 0 0 24px; overflow: hidden; }
.small .scroll { border-radius: 0 10px 0 0; }
.small .thumb { height: 44px; }
.helper { position: absolute; left: 306px; top: 17px; width: 97px; height: 49px; border-radius: 25px; overflow: hidden; display: flex; background: #fff; box-shadow: 0 1px 5px rgba(0,0,0,.35); }
.helper div { width: 49px; display: flex; align-items: center; justify-content: center; }
.helper .bot { background: #058a45; width: 48px; }
.sidebar > .scroll .thumb { height: 866px; }

/* editor header */
.main { flex: 1; display: flex; flex-direction: column; min-width: 0; }
.edit-head { flex: none; height: 82px; border-bottom: 2px solid #e2e8f0; background: #fff; display: flex; align-items: center; padding: 0 32px; gap: 32px; }
h1 { font-size: 30.7px; line-height: 40px; width: 315px; padding-top: 2px; letter-spacing: -.05px; white-space: nowrap; }
.chip.type { width: 126px; }
.chip.dark { width: 405px; background: #262f40; border-color: #262f40; color: #fff; letter-spacing: -.16px; }
.actions { margin-left: auto; display: flex; align-items: center; gap: 16px; }
.live { width: 265px; gap: 24px; letter-spacing: -.45px; }
.close { width: 284px; gap: 32px; letter-spacing: -.19px; }
.savepage { width: 256px; gap: 32px; letter-spacing: -.19px; }

/* component palette */
.workspace { flex: 1; display: flex; min-height: 0; }
.components { width: 512px; border-right: 2px solid #e2e8f0; background: #fcfcfc; display: flex; overflow: hidden; }
.comp-body { width: 480px; padding: 25px 24px 0; }
h4 { line-height: 40px; letter-spacing: -.36px; }
.grid { display: grid; grid-template-columns: 208px 208px; gap: 16px; margin-top: 23px; }
.tile { min-height: 124px; border: 2px solid #e2e8f0; border-radius: 16px; background: #fff; padding: 24px 0 23px; display: flex; flex-direction: column; align-items: center; text-align: center; font-size: 23px; line-height: 32px; font-weight: 600; letter-spacing: -.27px; }
.tile.loose { letter-spacing: 0; }
.tile svg { margin-bottom: 9px; }
.quick { margin-top: 33px; font-size: 23px; line-height: 32px; font-weight: 600; color: #848b9b; letter-spacing: -.18px; }
.components .thumb { height: 1100px; }

/* builder */
.builder { flex: 1; display: flex; flex-direction: column; min-width: 0; }
.build-head { flex: none; height: 128px; border-bottom: 2px solid #e2e8f0; display: flex; align-items: center; padding: 0 32px; gap: 32px; }
.build-head h2 { width: 182px; font-size: 30.7px; line-height: 40px; padding-top: 2px; letter-spacing: -.33px; white-space: nowrap; }
.devices { display: flex; gap: 16px; }
.devices .btn, .sq { width: 80px; }
.preview { width: 215px; gap: 32px; letter-spacing: -.4px; }
.saveonly { width: 171px; gap: 32px; letter-spacing: -.3px; }
.canvas { flex: 1; display: flex; min-height: 0; overflow: hidden; background: #fafcfb; }
.stage { width: 1348px; padding: 64px 64px 0; }
.canvas .thumb { height: 552px; }
.paper { height: 1000px; background: #fff; }
.block { border: 4px solid transparent; padding: 33px 32px 31px; font-size: 30.7px; line-height: 48px; white-space: nowrap; }
.headline { border-color: #3333ff; background: #f4f4ff; color: #14b884; font-weight: 700; text-align: center; letter-spacing: -.17px; }
.tighter { letter-spacing: -.9px; }
.sub { color: #555; font-weight: 700; text-align: center; letter-spacing: -.42px; }
.looser { letter-spacing: -.04px; }
.hero { display: flex; text-align: center; padding-top: 31px; padding-bottom: 32px; height: 120px; letter-spacing: -.04px; }
.hero span { flex: 1; padding-top: 2px; }
.body { color: #444; letter-spacing: -.2px; }
.l1 { letter-spacing: -.12px; }
.l3 { letter-spacing: -.26px; }
.l4 { letter-spacing: -.11px; }
.l5 { letter-spacing: -.16px; }

/* floating buttons */
.spark-dock { position: absolute; left: 2466px; top: 924px; width: 80px; height: 72px; border-radius: 36px 0 0 36px; background: #fff; box-shadow: 0 10px 30px rgba(0,0,0,.14), 0 0 3px rgba(0,0,0,.12); display: flex; align-items: center; padding-left: 16px; }
.fab { position: absolute; left: 2346px; top: 1010px; width: 136px; height: 112px; border: 4px solid #fff; border-radius: 56px; background: #2563eb; color: #fff; display: flex; align-items: center; justify-content: center; box-shadow: 0 16px 30px rgba(0,0,0,.13), 0 4px 10px rgba(0,0,0,.06); }

/* taskbar */
.taskbar { flex: none; height: 96px; background: linear-gradient(90deg, #10214a 0%, #10214c 70%, #11264a 100%); display: flex; align-items: center; color: #fff; }
.app { width: 48px; height: 48px; }
.widgets { margin-left: 32px; }
.apps { display: flex; gap: 8.1px; margin-left: 342.500px; }
.apps > div { width: 80px; height: 80px; display: flex; align-items: center; justify-content: center; position: relative; border-radius: 8px; }
.current { background: #233157; box-shadow: inset 0 0 0 2px #2d3b60; }
.open::after, .current::after { content: ""; position: absolute; bottom: 2px; left: 34px; width: 12px; height: 6px; border-radius: 3px; background: #99a0b4; }
.current::after { left: 24px; width: 32px; background: #5bcbff; }
.wa em { position: absolute; left: 42px; top: 6px; width: 32px; height: 32px; border-radius: 16px; background: #5bcbff; color: #0b1430; font-style: normal; font-size: 21px; line-height: 32px; text-align: center; }
.tray { margin-left: auto; margin-right: 40px; display: flex; align-items: center; }
.cloud { margin-left: 34px; }
.wifi { margin: 0 16px 0 31px; }
.clock { margin-left: 27px; width: 103px; text-align: right; font-size: 23px; line-height: 32px; letter-spacing: .2px; white-space: nowrap; }
.clock span { letter-spacing: -.4px; }
.badge { width: 32px; height: 32px; margin-left: 15px; border-radius: 16px; background: #5bcbff; color: #0b1430; font-size: 20px; line-height: 32px; text-align: center; }
```
